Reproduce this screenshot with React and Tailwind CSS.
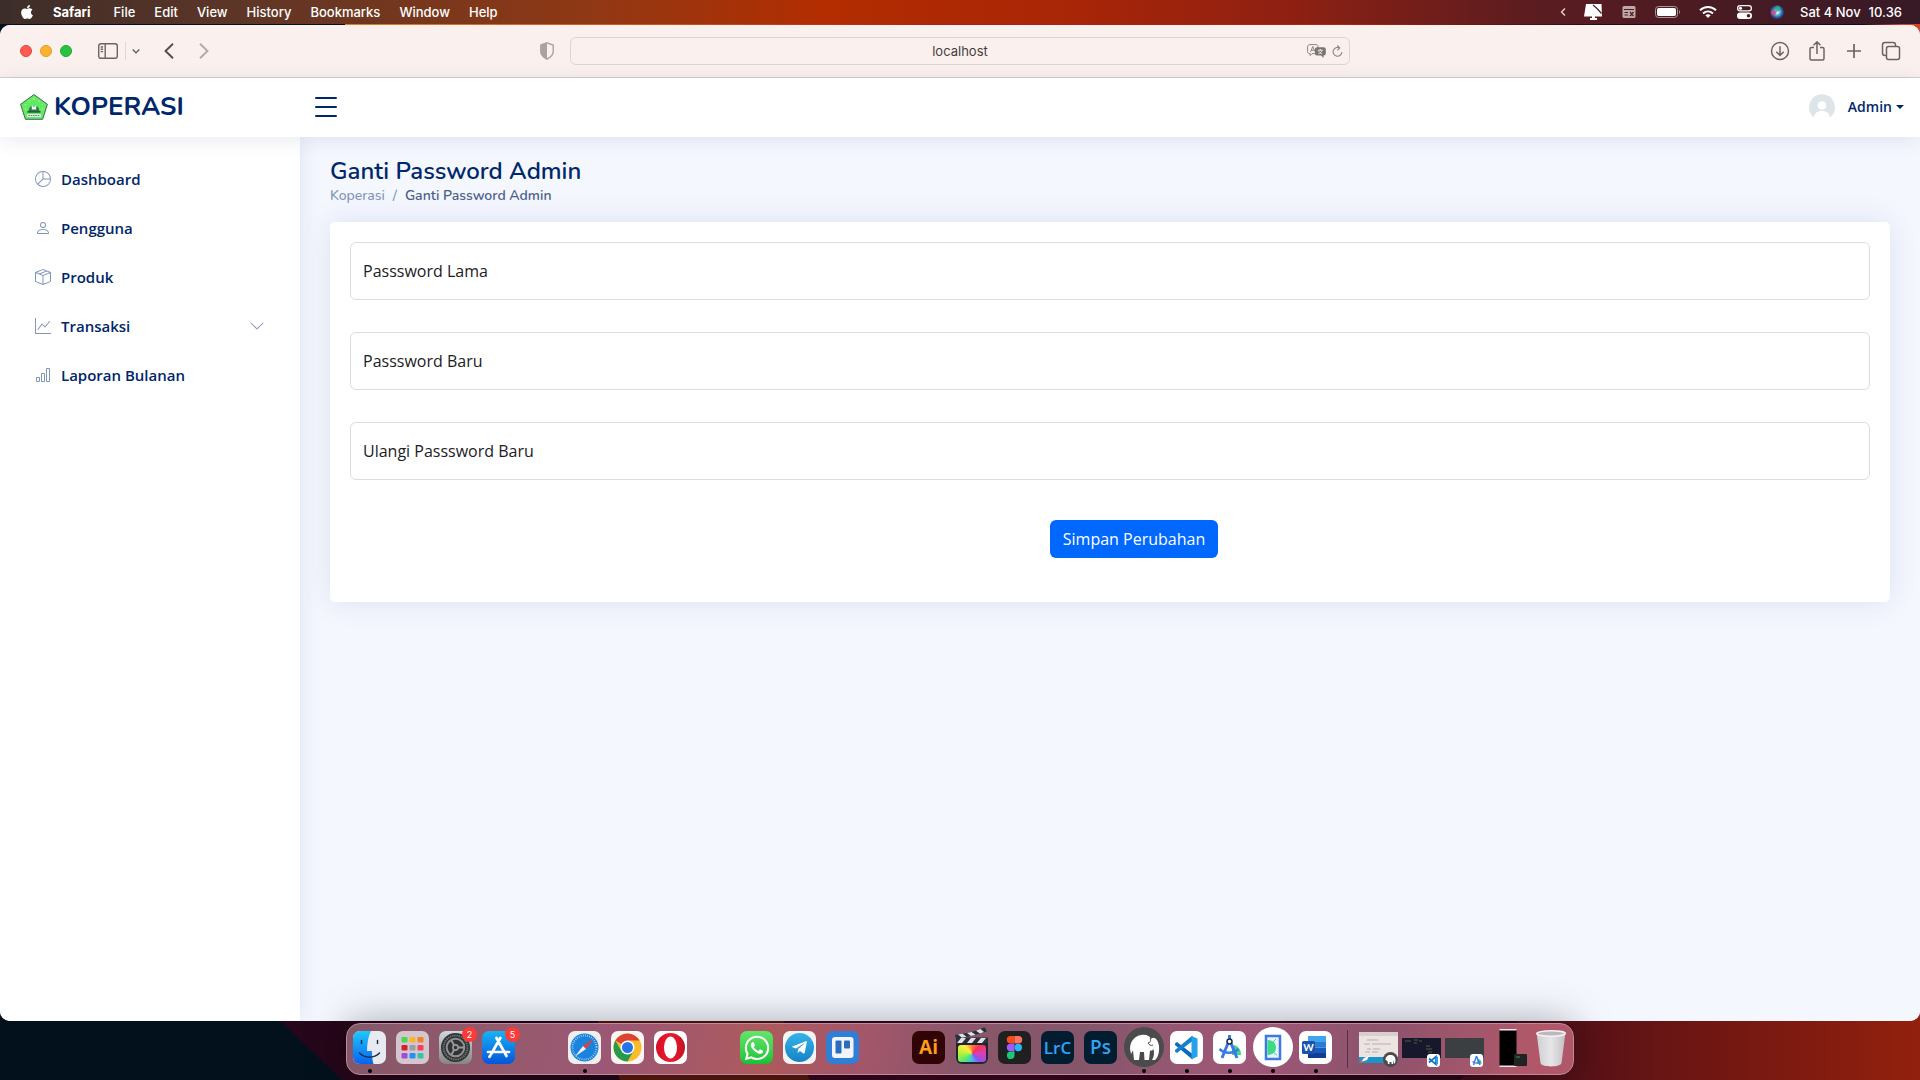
// ============================================================
// Koperasi Admin - change password page
// Desktop shell (menu bar, Safari window, dock) + page content.
// ============================================================

import {
  BsPieChart,
  BsPerson,
  BsBoxSeam,
  BsGraphUp,
  BsBarChart,
  BsChevronDown,
} from 'react-icons/bs';
import { FaApple, FaWhatsapp, FaTelegramPlane } from 'react-icons/fa';

const MENUS = ['File', 'Edit', 'View', 'History', 'Bookmarks', 'Window', 'Help'];

const NAV_ITEMS = [
  { label: 'Dashboard', Icon: BsPieChart },
  { label: 'Pengguna', Icon: BsPerson },
  { label: 'Produk', Icon: BsBoxSeam },
  { label: 'Transaksi', Icon: BsGraphUp, expandable: true },
  { label: 'Laporan Bulanan', Icon: BsBarChart },
];

const FIELDS = [
  { id: 'old-password', label: 'Passsword Lama' },
  { id: 'new-password', label: 'Passsword Baru' },
  { id: 'repeat-password', label: 'Ulangi Passsword Baru' },
];

// ---------- Wallpaper ----------

const Wallpaper = () => (
  <svg className="absolute inset-0 h-full w-full" viewBox="0 0 1920 1080" preserveAspectRatio="none" aria-hidden="true">
    <defs>
      <linearGradient id="wpTop" x1="0" x2="1" y1="0" y2="0">
        <stop offset="0.18" stopColor="#d9812a" />
        <stop offset="0.35" stopColor="#c9551c" />
        <stop offset="0.5" stopColor="#a3201c" />
        <stop offset="0.7" stopColor="#b02812" />
        <stop offset="0.84" stopColor="#1a0a1c" />
        <stop offset="0.97" stopColor="#120a20" />
        <stop offset="0.99" stopColor="#d2452c" />
      </linearGradient>
      <linearGradient id="wpRight" x1="0" x2="1" y1="0" y2="0">
        <stop offset="0" stopColor="#3f0c1b" />
        <stop offset="0.5" stopColor="#6d1613" />
        <stop offset="1" stopColor="#93200d" />
      </linearGradient>
    </defs>
    <rect width="1920" height="1080" fill="#26061a" />
    <rect width="1920" height="500" fill="url(#wpTop)" />
    <rect width="345" height="500" fill="#04121f" />
    <path d="M0 1000H258L342 1080H0Z" fill="#03111d" />
    <path d="M590 1000H775L810 1080H620Z" fill="#5a180f" />
    <path d="M775 1000H1270L1320 1080H810Z" fill="#38061f" />
    <path d="M1270 1000H1540L1460 1080H1320Z" fill="#2b0718" />
    <path d="M1540 1000H1920V1080H1460Z" fill="url(#wpRight)" />
  </svg>
);

// ---------- Menu bar ----------

const MenuBar = () => (
  <header className="relative flex h-6 shrink-0 items-center justify-between bg-[linear-gradient(90deg,#3c2d2a_0%,#5f3626_13%,#913814_31%,#b32d00_43%,#a82507_56%,#8f2012_67%,#5a1c20_80%,#361a26_100%)] pr-[18px] pl-5 text-[13px] leading-[22px] font-medium text-white">
    <nav className="flex items-center gap-[19px]" aria-label="Menu bar">
      <FaApple className="h-4 w-[14px]" />
      <span className="mr-1 font-bold">Safari</span>
      {MENUS.map((menu) => (
        <button key={menu} type="button">{menu}</button>
      ))}
    </nav>
    <div className="flex items-center">
      <svg className="mr-[17px] h-3 w-2" viewBox="0 0 8 12" fill="none" stroke="#ead9d9" strokeWidth="1.3">
        <path d="M6 2.5 2.5 6 6 9.5" />
      </svg>
      <svg className="mr-5 h-4 w-[18px]" viewBox="0 0 18 16">
        <path d="M2 0H17.5L18 12.5H0Z" fill="#fff" />
        <path d="M8 12H11V14H13V16H6V14H8Z" fill="#fff" />
        <path d="m9 1 4 3.500 4.500 5" stroke="#532024" strokeWidth="1.200" fill="none" />
      </svg>
      <svg className="mr-[19px] h-[14px] w-[14px]" viewBox="0 0 14 14">
        <rect x="0.5" y="1" width="13" height="12" rx="1.5" fill="#bfa8a8" />
        <path d="M2 4.500H12M2.500 7.500H6M2.500 10H6M8 7l3.500 4M11.500 7 8 11" stroke="#4b2024" strokeWidth="1.200" />
      </svg>
      <svg className="mr-[18px] h-3 w-[26px]" viewBox="0 0 26 12">
        <rect x="0.5" y="0.5" width="22" height="11" rx="3" fill="none" stroke="#a89598" />
        <rect x="2" y="2" width="19" height="8" rx="1.8" fill="#fff" />
        <path d="M24 4v4c1.300-.5 1.300-3.500 0-4Z" fill="#a89598" />
      </svg>
      <svg className="mr-5 h-3 w-[18px]" viewBox="0 0 18 12" fill="none" stroke="#fff" strokeWidth="2">
        <path d="M1 4.300C5.500 0 12.500 0 17 4.300M4 7.400c3-2.700 7-2.700 10 0" />
        <path d="M6.300 9.300c1.700-1.300 3.700-1.300 5.400 0L9 12Z" fill="#fff" stroke="none" />
      </svg>
      <svg className="mr-[18px] h-[14px] w-[15px]" viewBox="0 0 15 14">
        <rect x="0.6" y="0.6" width="13.800" height="5.300" rx="2.650" fill="none" stroke="#fff" strokeWidth="1.200" />
        <circle cx="3.500" cy="3.250" r="1.600" fill="#fff" />
        <rect y="7.600" width="15" height="6.400" rx="3.200" fill="#fff" />
        <circle cx="11.500" cy="10.800" r="1.800" fill="#4b1d22" />
      </svg>
      <span className="mr-4 h-[14px] w-[14px] rounded-full bg-[radial-gradient(circle,#fff_8%,#4fc4d8_30%,#3456a8_55%,#16213e_85%)]">
        <svg viewBox="0 0 14 14">
          <path d="M1 8C1 4 4 4 7 7 4 12 2 11 1 8Z" fill="#e0417c" opacity=".8" />
          <path d="M7 1c4 0 5 4 0 6C4 5 4 2 7 1Z" fill="#2fae7d" opacity=".8" />
        </svg>
      </span>
      <span className="mr-2">Sat 4 Nov</span>
      <time>10.36</time>
    </div>
  </header>
);

// ---------- Safari toolbar ----------

const Toolbar = () => (
  <div className="grid h-[53px] shrink-0 grid-cols-[1fr_780px_1fr] items-center border-b border-[#d6cfce] bg-[#faf1ef] text-[#6b6462]">
    <div className="flex items-center pl-5">
      <div className="flex gap-2">
        <button type="button" aria-label="Close" className="h-3 w-3 rounded-full border border-[#e2463f] bg-[#ff5a52]" />
        <button type="button" aria-label="Minimize" className="h-3 w-3 rounded-full border border-[#df9c2a] bg-[#fdb32f]" />
        <button type="button" aria-label="Zoom" className="h-3 w-3 rounded-full border border-[#1fa632] bg-[#28c240]" />
      </div>
      <button type="button" aria-label="Show sidebar" className="ml-[26px]">
        <svg className="h-4 w-5" viewBox="0 0 20 16" fill="none" stroke="currentColor" strokeWidth="1.400">
          <rect x="0.7" y="0.7" width="18.600" height="14.600" rx="2.200" />
          <path d="M7.200 1v14M2.600 4h2.500M2.600 6.300h2.500M2.600 8.600h2.500" />
        </svg>
      </button>
      <span className="ml-[7px] h-[18px] w-px bg-[#ded6d4]" />
      <button type="button" aria-label="Tab groups" className="ml-[6px]">
        <svg className="h-2 w-2" viewBox="0 0 8 8" fill="none" stroke="currentColor" strokeWidth="1.500">
          <path d="m.7 2.500 3.300 3.200 3.300-3.200" />
        </svg>
      </button>
      <button type="button" aria-label="Back" className="ml-6">
        <svg className="h-4 w-[10px]" viewBox="0 0 10 16" fill="none" stroke="#544d4b" strokeWidth="1.900">
          <path d="M9 .8 1.500 8 9 15.200" />
        </svg>
      </button>
      <button type="button" aria-label="Forward" className="ml-[25px]">
        <svg className="h-4 w-[10px]" viewBox="0 0 10 16" fill="none" stroke="#b3aaa8" strokeWidth="1.900">
          <path d="M1 .8 8.500 8 1 15.200" />
        </svg>
      </button>
      <svg className="mr-4 ml-auto h-[18px] w-[14px]" viewBox="0 0 14 18">
        <path d="M7 .8 13.200 3v6.500c0 3.500-3 6-6.200 7.700C3.800 15.500.8 13 .8 9.500V3Z" fill="none" stroke="#aaa3a1" strokeWidth="1.400" />
        <path d="M7 .8v16.400C3.800 15.500.8 13 .8 9.500V3Z" fill="#aaa3a1" />
      </svg>
    </div>

    <div className="flex h-7 items-center rounded-md border border-[#ddd5d3] pr-[6px] pl-[42px]">
      <input
        aria-label="Address"
        defaultValue="localhost"
        className="min-w-0 flex-1 bg-transparent pt-px text-center text-[13px] text-[#443e3d] outline-none"
      />
      <svg className="h-[14px] w-[19px]" viewBox="0 0 19 14">
        <path d="M3 .6h6c1.300 0 2 .7 2 2v5c0 1.300-.7 2-2 2H5L3.200 11.500V9.600C1.500 9.600.6 9 .6 7.600v-5C.6 1.300 1.700.6 3 .6Z" fill="none" stroke="#8c8583" />
        <path d="m3.600 7.800 2.200-5.300L8 7.800M4.300 6.200h3" fill="none" stroke="#8c8583" />
        <path d="M10 3.300h6.500c1.400 0 2.300.8 2.300 2.100v4c0 1.300-.9 2-2.300 2V14L14 11.400h-4c-1.300 0-2-.7-2-2v-4c0-1.300.7-2.100 2-2.100Z" fill="#7b7472" />
        <path d="M10.800 6.200h5M13.300 5v1.200M11.300 10c2-.8 3.300-2 3.700-3.800M11.600 6.500c.6 1.600 1.900 2.800 3.500 3.500" fill="none" stroke="#fff" strokeWidth=".8" />
      </svg>
      <button type="button" aria-label="Reload" className="ml-[6px]">
        <svg className="h-3 w-[11px]" viewBox="0 0 11 12" fill="none" stroke="#8c8583" strokeWidth="1.100">
          <path d="M7.500 2.900A4.400 4.400 0 1 0 9.900 7M5.300.4l2.500 2.500L5.300 5.400" />
        </svg>
      </button>
    </div>

    <div className="flex items-center justify-end gap-[17px] pr-[19px]">
      <button type="button" aria-label="Downloads">
        <svg className="h-5 w-5" viewBox="0 0 20 20" fill="none" stroke="currentColor" strokeWidth="1.500">
          <circle cx="10" cy="10" r="8.500" />
          <path d="M10 5.300v9M6.300 10.800 10 14.400l3.700-3.600" />
        </svg>
      </button>
      <button type="button" aria-label="Share">
        <svg className="h-5 w-5" viewBox="0 0 20 20" fill="none" stroke="currentColor" strokeWidth="1.500">
          <path d="M7 6.500H4.500c-1 0-1.500.6-1.500 1.500v9.500c0 .9.500 1.500 1.500 1.500h11c1 0 1.500-.6 1.500-1.500V8c0-.9-.5-1.500-1.500-1.500H13M10 13V1M6.500 4.200 10 .9l3.500 3.300" />
        </svg>
      </button>
      <button type="button" aria-label="New tab">
        <svg className="h-5 w-5" viewBox="0 0 20 20" fill="none" stroke="currentColor" strokeWidth="1.700">
          <path d="M10 3v14M3 10h14" />
        </svg>
      </button>
      <button type="button" aria-label="Tab overview">
        <svg className="h-5 w-5" viewBox="0 0 20 20" fill="none" stroke="currentColor" strokeWidth="1.500">
          <rect x="5.500" y="5.500" width="13" height="13" rx="2" />
          <path d="M5.500 14.500H4C2.500 14.500 1.500 13.600 1.500 12V4C1.500 2.500 2.500 1.500 4 1.500h8c1.500 0 2.500 1 2.500 2.500v1.500" />
        </svg>
      </button>
    </div>
  </div>
);

// ---------- Page header ----------

const Logo = () => (
  <svg className="h-[26px] w-7" viewBox="0 0 28 26">
    <path d="M14 .6 27.400 10.300 22.600 25.300H5.400L.6 10.300Z" fill="#5fea6a" stroke="#3f6b46" strokeWidth="1" />
    <g fill="#d6ee3c">
      <circle cx="14" cy="5" r=".9" />
      <circle cx="9" cy="7" r=".8" />
      <circle cx="19" cy="7" r=".8" />
      <circle cx="5.500" cy="10.500" r=".8" />
      <circle cx="22.500" cy="10.500" r=".8" />
      <circle cx="5.500" cy="15" r=".8" />
      <circle cx="22.500" cy="15" r=".8" />
    </g>
    <path d="M8.500 17.500c.2-2 1-4 2.500-5.500l1.500 2.500 1.500-3 1.500 3L17 12c1.500 1.500 2.300 3.500 2.500 5.500Z" fill="#2c7a3c" />
    <path d="M12 11.500 14 13l2-1.500.3 4h-4.600Z" fill="#f4fff4" />
    <path d="M7.500 17h13v1.800h-13Z" fill="#2a5f38" />
    <path d="M7 20h14v3H7Z" fill="#dfe9e0" />
    <path d="M8.500 21.500h11" stroke="#6c7f70" strokeDasharray="1.500 .8" />
  </svg>
);

const PageHeader = () => (
  <header className="relative z-20 flex h-[59px] shrink-0 items-center bg-white pr-4 pb-[2px] pl-5 text-[#00266b] shadow-[0_2px_20px_rgba(1,41,112,0.1)]">
    <div className="flex w-[295px] items-center">
      <a href="#" className="flex items-center gap-[6px]">
        <Logo />
        <span className="font-[Nunito,'Open_Sans',sans-serif] text-[26px] leading-8 font-bold">KOPERASI</span>
      </a>
    </div>
    <button type="button" aria-label="Toggle sidebar">
      <svg className="h-5 w-[22px]" viewBox="0 0 22 20" stroke="currentColor" strokeWidth="2" strokeLinecap="round">
        <path d="M1 1h20M1 10h20M1 19h20" />
      </svg>
    </button>
    <button type="button" className="ml-auto flex items-center text-[14px] font-semibold">
      <svg className="mr-[13px] h-[26px] w-[26px]" viewBox="0 0 26 26">
        <path d="M5 23.500A13 13 0 1 1 21 23.500C20.800 19.500 18 17 13 17s-7.800 2.500-8 6.500Z" fill="#dee5e8" />
        <circle cx="13" cy="11.500" r="4.300" fill="#fff" />
      </svg>
      Admin
      <svg className="ml-1 h-1 w-2" viewBox="0 0 8 4" fill="currentColor">
        <path d="M0 0h8L4 4Z" />
      </svg>
    </button>
  </header>
);

const Sidebar = () => (
  <aside className="relative z-10 w-[300px] shrink-0 bg-white p-5 shadow-[0_0_20px_rgba(1,41,112,0.1)]">
    <ul className="flex flex-col gap-[5px]">
      {NAV_ITEMS.map(({ label, Icon, expandable }) => (
        <li key={label}>
          <a href="#" className="flex h-11 items-center px-[15px] text-[15px] font-semibold text-[#00266b]">
            <Icon className="mr-[10px] h-4 w-4 text-[#8095bb]" />
            {label}
            {expandable && <BsChevronDown className="ml-auto h-4 w-4 text-[#8095bb]" />}
          </a>
        </li>
      ))}
    </ul>
  </aside>
);

const PasswordForm = () => (
  <form
    className="mt-4 rounded-[5px] bg-white px-5 pt-5 pb-11 shadow-[0_0_30px_rgba(1,41,112,0.1)]"
    onSubmit={(e) => e.preventDefault()}
  >
    <div className="flex flex-col gap-8">
      {FIELDS.map(({ id, label }) => (
        <div key={id} className="relative">
          <input
            id={id}
            type="password"
            className="block h-[58px] w-full rounded-md border border-[#d9dee3] px-3 pt-5 text-[16px] text-[#212529] outline-none"
          />
          <label htmlFor={id} className="pointer-events-none absolute top-4 left-[13px] text-[16px] leading-[26px] text-[#1c2024]">
            {label}
          </label>
        </div>
      ))}
    </div>
    <div className="mt-10 flex justify-center pl-12">
      <button type="submit" className="h-[38px] rounded-md bg-[#0068fe] px-[13px] text-[16px] text-white">
        Simpan Perubahan
      </button>
    </div>
  </form>
);

const Main = () => (
  <main className="flex-1 bg-[#f4f7fe] px-[30px] pt-5">
    <h1 className="font-[Nunito,'Open_Sans',sans-serif] text-[24px] leading-[28px] font-semibold text-[#00266b]">
      Ganti Password Admin
    </h1>
    <nav aria-label="Breadcrumb" className="flex gap-2 font-[Nunito,'Open_Sans',sans-serif] text-[14px] leading-[21px] font-medium text-[#8095bb]">
      <a href="#">Koperasi</a>
      <span>/</span>
      <span className="font-semibold text-[#4a608a]">Ganti Password Admin</span>
    </nav>
    <PasswordForm />
  </main>
);

// ---------- Dock ----------

const FinderIcon = () => (
  <svg viewBox="0 0 33 33">
    <defs>
      <linearGradient id="finderBlue" x1="0" x2="0" y1="0" y2="1">
        <stop stopColor="#1fc8fb" />
        <stop offset="1" stopColor="#0a62f0" />
      </linearGradient>
    </defs>
    <rect width="33" height="33" rx="7" fill="#e8eaf0" />
    <path d="M18 0c-3 6-4 13-4 20h5c-.3 4 .3 9 1.500 13H7a7 7 0 0 1-7-7V7a7 7 0 0 1 7-7Z" fill="url(#finderBlue)" />
    <path d="M8.500 9.500v3M24.500 9.500v3M6.500 22c5.500 5.500 14.500 5.500 20 0" stroke="#16304d" strokeWidth="1.500" strokeLinecap="round" fill="none" />
  </svg>
);

const LAUNCHPAD_COLORS = ['#46d94c', '#f9b52c', '#f58122', '#d6202c', '#98a1a8', '#f6405f', '#9c4cd8', '#1e93f5', '#2fc8a8'];

const LaunchpadIcon = () => (
  <svg viewBox="0 0 33 33">
    <rect width="33" height="33" rx="7" fill="#d5c5ce" />
    {LAUNCHPAD_COLORS.map((color, i) => (
      <rect key={color} x={5.5 + (i % 3) * 8} y={6 + Math.floor(i / 3) * 8} width="6" height="5.500" rx="1.300" fill={color} />
    ))}
  </svg>
);

const SettingsIcon = () => (
  <svg viewBox="0 0 33 33">
    <defs>
      <linearGradient id="settingsBg" x1="0" x2="0" y1="0" y2="1">
        <stop stopColor="#cfd8dd" />
        <stop offset="1" stopColor="#858585" />
      </linearGradient>
    </defs>
    <rect width="33" height="33" rx="7" fill="url(#settingsBg)" />
    <circle cx="16.500" cy="16.500" r="14.500" fill="#303234" />
    <circle cx="16.500" cy="16.500" r="12" fill="none" stroke="#797c7e" strokeWidth="1.800" strokeDasharray="1.300 .9" />
    <circle cx="16.500" cy="16.500" r="8.800" fill="none" stroke="#8d9091" strokeWidth="2" />
    <circle cx="16.500" cy="16.500" r="2.600" fill="none" stroke="#989b9c" strokeWidth="1.600" />
    <path d="M19 16.500h6M15.200 14.300l-3-5.200M15.200 18.700l-3 5.200" stroke="#989b9c" strokeWidth="2" />
  </svg>
);

const AppStoreIcon = () => (
  <svg viewBox="0 0 33 33">
    <defs>
      <linearGradient id="storeBg" x1="0" x2="0" y1="0" y2="1">
        <stop stopColor="#18b2f4" />
        <stop offset="1" stopColor="#0755d9" />
      </linearGradient>
    </defs>
    <rect width="33" height="33" rx="7" fill="url(#storeBg)" />
    <path d="m18.300 7-8.800 15.500M14.500 7 24.500 25M6 21h14M23.500 21H27M8.300 24.500l-.8 1.300" stroke="#fff" strokeWidth="2.700" strokeLinecap="round" />
  </svg>
);

const SafariIcon = () => (
  <svg viewBox="0 0 33 33">
    <rect width="33" height="33" rx="7" fill="#efeff0" />
    <circle cx="16.500" cy="16.500" r="14" fill="#1b83dc" />
    <circle cx="16.500" cy="16.500" r="12" fill="none" stroke="#d5ebfb" strokeWidth="2" strokeDasharray=".6 1.500" />
    <path d="M26 7.500 15 15l3 3Z" fill="#ee3c34" />
    <path d="M7 25.500 15 15l3 3Z" fill="#f3f3f3" />
  </svg>
);

const ChromeIcon = () => (
  <svg viewBox="0 0 33 33">
    <rect width="33" height="33" rx="7" fill="#fbf5f3" />
    <circle cx="16.500" cy="16.500" r="14" fill="#fbbc2c" />
    <path d="M16.500 16.500 4.400 9.500A14 14 0 0 1 28.600 9.500H16.500Z" fill="#dd4133" />
    <path d="M4.400 9.500A14 14 0 0 0 16.500 30.500L22.600 20 16.500 16.500 10.500 20Z" fill="#279b4c" />
    <circle cx="16.500" cy="16.500" r="7" fill="#fff" />
    <circle cx="16.500" cy="16.500" r="5.500" fill="#2374e8" />
  </svg>
);

const OperaIcon = () => (
  <svg viewBox="0 0 33 33">
    <defs>
      <linearGradient id="operaRed" x1="0" x2="1" y1="0" y2="0">
        <stop stopColor="#d40f26" />
        <stop offset=".5" stopColor="#f01a30" />
        <stop offset="1" stopColor="#c01322" />
      </linearGradient>
    </defs>
    <rect width="33" height="33" rx="7" fill="#fff" />
    <circle cx="16.500" cy="16.500" r="14.500" fill="url(#operaRed)" />
    <ellipse cx="16.500" cy="16.500" rx="6.500" ry="11" fill="#fff" />
  </svg>
);

const WhatsAppIcon = () => (
  <span className="flex h-full w-full items-center justify-center rounded-[7px] bg-linear-to-b from-[#62e56b] to-[#12c234] text-white">
    <FaWhatsapp className="h-[28px] w-[28px]" />
  </span>
);

const TelegramIcon = () => (
  <span className="flex h-full w-full items-center justify-center rounded-[7px] bg-[#f4f4f5]">
    <span className="flex h-[29px] w-[29px] items-center justify-center rounded-full bg-linear-to-b from-[#33b3ea] to-[#1683c6] text-white">
      <FaTelegramPlane className="h-[17px] w-[17px]" />
    </span>
  </span>
);

const TrelloIcon = () => (
  <svg viewBox="0 0 33 33">
    <rect width="33" height="33" rx="7" fill="#2f7fd8" />
    <rect x="6" y="6" width="21.500" height="21" rx="3" fill="#f2f4f8" />
    <rect x="9.500" y="9.500" width="6" height="13" rx="1" fill="#2a6cc0" />
    <rect x="18" y="9.500" width="6" height="8" rx="1" fill="#2a6cc0" />
  </svg>
);

const FinalCutIcon = () => (
  <svg viewBox="0 0 33 33" className="overflow-visible">
    <path d="M1 12h32v15a6 6 0 0 1-6 6H7a6 6 0 0 1-6-6Z" fill="#22252b" />
    <foreignObject x="3" y="14" width="28" height="17">
      <div className="h-full w-full rounded-[3px] bg-[conic-gradient(#ff7a3c,#f4364c,#e03cb8,#8a55e8,#48b8f5,#4be87a,#b8f03c,#fff03c,#ff7a3c)]" />
    </foreignObject>
    <path d="M1 6.500h32V12H1ZM0 4C8 3 20 1 29-3.500c1 0 2.500 2 2.500 4C22 4 12 6 1 8Z" fill="#2c2f38" />
    <path d="m2 12 4-5h5l-4 5ZM12 12l4-5h5l-4 5ZM22 12l4-5h5l-4 5Z" fill="#dfe2ea" />
    <path d="m3 3.500 4 3.200 4.500-1L7.500 2.800ZM12 2l4 3 4.500-1.200L16.500 1ZM21-.3l4 2.700 4-1.400-3.500-3Z" fill="#dfe2ea" />
  </svg>
);

const FigmaIcon = () => (
  <svg viewBox="0 0 33 33">
    <rect width="33" height="33" rx="7" fill="#202020" />
    <path d="M16.500 5h-4a3.700 3.700 0 0 0 0 7.400h4Z" fill="#f24e1e" />
    <path d="M16.500 5h4a3.700 3.700 0 0 1 0 7.400h-4Z" fill="#ff7262" />
    <path d="M16.500 12.800h-4a3.700 3.700 0 0 0 0 7.400h4Z" fill="#a259ff" />
    <circle cx="20.300" cy="16.500" r="3.700" fill="#29b8f6" />
    <path d="M12.500 20.500h4v3.700a3.800 3.800 0 1 1-4-3.700Z" fill="#16c878" />
  </svg>
);

const AiIcon = () => (
  <span className="flex h-full w-full items-center justify-center rounded-[7px] bg-[#300405] font-['Open_Sans',sans-serif] text-[19px] leading-none font-bold text-[#ff9a1a]">Ai</span>
);
const LrcIcon = () => (
  <span className="flex h-full w-full items-center justify-center rounded-[7px] bg-[#021d2f] font-['Open_Sans',sans-serif] text-[17px] leading-none font-semibold text-[#2fa3f7]">LrC</span>
);
const PsIcon = () => (
  <span className="flex h-full w-full items-center justify-center rounded-[7px] bg-[#021d2f] font-['Open_Sans',sans-serif] text-[19px] leading-none font-semibold text-[#2fa3f7]">Ps</span>
);

const MampIcon = () => (
  <svg viewBox="0 0 40 40">
    <circle cx="20" cy="20" r="20" fill="#4b4b4b" />
    <path d="M6 22c0-8 5-13 11-14 5-1 9 1 10 4 3-3 7 0 8 7 .5 6-1 12-4 14h-3c2-3 2.500-7 1.500-11-1 1.500-2.500 2-3.500 1.500L25 33h-4.500l-.5-8h-4l-1 8h-5L9 23.500 7 27Z" fill="#fff" />
    <path d="M26 11c1 3 1 4-2 5 1 2 3 3 5 2" fill="none" stroke="#4b4b4b" strokeWidth="1" />
  </svg>
);

const VsCodeIcon = () => (
  <svg viewBox="0 0 33 33">
    <rect width="33" height="33" rx="7" fill="#fff" />
    <path d="M5 12.500 7 11 22.500 23v5.500L5 14Z" fill="#0a6ab8" />
    <path d="M5 20.500 7 22 22.500 10V4.500L5 19Z" fill="#1580cc" />
    <path d="m21.500 5 6 2.500v18l-6 2.800Z" fill="#27a0ee" />
  </svg>
);

const AndroidStudioIcon = () => (
  <svg viewBox="0 0 33 33">
    <rect width="33" height="33" rx="7" fill="#fff" />
    <path d="M19 14c5 0 9 3 9 10h-9Z" fill="#3ddc84" />
    <path d="M15.500 11 9 27M17.500 11l6.500 16" stroke="#3c79e6" strokeWidth="3" />
    <path d="M6.500 18c5 5 14 5 19 0" stroke="#3c79e6" strokeWidth="2.500" fill="none" />
    <path d="M15 4h3v5h-3Z" fill="#3c79e6" />
    <circle cx="16.500" cy="10.500" r="2.500" fill="#fff" stroke="#173044" strokeWidth="1.500" />
  </svg>
);

const EmulatorIcon = () => (
  <svg viewBox="0 0 40 40">
    <circle cx="20" cy="20" r="20" fill="#fff" />
    <rect x="13" y="9" width="14" height="23" fill="#e8f1fd" stroke="#3c79e6" strokeWidth="2.500" />
    <path d="M14.500 13c5 0 8.500 3 8.500 7.500S19.500 28 14.500 28Z" fill="#3ddc84" />
    <path d="m20 15 3-3M21 26l3 2" stroke="#3ddc84" />
  </svg>
);

const WordIcon = () => (
  <svg viewBox="0 0 33 33">
    <rect width="33" height="33" rx="7" fill="#fff" />
    <path d="M9 5h18v6H9Z" fill="#41a5ee" />
    <path d="M9 11h18v5.500H9Z" fill="#2b7cd3" />
    <path d="M9 16.500h18V22H9Z" fill="#185abd" />
    <path d="M9 22h18v5H9Z" fill="#103f91" />
    <rect x="3" y="10" width="13" height="13" rx="1.500" fill="#1a53ad" />
    <text x="9.500" y="20" textAnchor="middle" fill="#fff" fontSize="10" fontWeight="700" fontFamily="Lato, sans-serif">W</text>
  </svg>
);

// null leaves an empty slot between groups of apps
const DOCK_APPS = [
  { name: 'Finder', Icon: FinderIcon, open: true },
  { name: 'Launchpad', Icon: LaunchpadIcon },
  { name: 'System Preferences', Icon: SettingsIcon, badge: 2 },
  { name: 'App Store', Icon: AppStoreIcon, badge: 5 },
  null,
  { name: 'Safari', Icon: SafariIcon, open: true },
  { name: 'Chrome', Icon: ChromeIcon },
  { name: 'Opera', Icon: OperaIcon },
  null,
  { name: 'WhatsApp', Icon: WhatsAppIcon },
  { name: 'Telegram', Icon: TelegramIcon },
  { name: 'Trello', Icon: TrelloIcon },
  null,
  { name: 'Illustrator', Icon: AiIcon },
  { name: 'Final Cut Pro', Icon: FinalCutIcon },
  { name: 'Figma', Icon: FigmaIcon },
  { name: 'Lightroom Classic', Icon: LrcIcon },
  { name: 'Photoshop', Icon: PsIcon },
  { name: 'MAMP', Icon: MampIcon, open: true, large: true },
  { name: 'Visual Studio Code', Icon: VsCodeIcon, open: true },
  { name: 'Android Studio', Icon: AndroidStudioIcon, open: true },
  { name: 'Android Emulator', Icon: EmulatorIcon, open: true, large: true },
  { name: 'Word', Icon: WordIcon, open: true },
];

const DockApp = ({ app }) => {
  if (!app) return <li className="w-[43px]" />;
  const { name, Icon, open, badge, large } = app;
  return (
    <li className="relative flex h-full w-[43px] justify-center">
      <button
        type="button"
        aria-label={name}
        className={large ? 'mt-[3px] h-10 w-10' : 'mt-[7px] h-[33px] w-[33px]'}
      >
        <Icon />
      </button>
      {badge && (
        <span className="absolute top-[3px] right-0 flex h-[15px] w-[15px] items-center justify-center rounded-full bg-[#fb3b38] text-[9px] leading-none text-white">
          {badge}
        </span>
      )}
      {open && <span className="absolute bottom-px h-1 w-1 rounded-full bg-black" />}
    </li>
  );
};

const MampWindow = () => (
  <svg className="h-9 w-[39px]" viewBox="0 0 39 36">
    <rect y="1" width="39" height="31" fill="#ece4e2" />
    <path d="M0 1h39v4H0Z" fill="#d9cecc" />
    <path d="M8 9h11M5 13h6M13 13h19M8 18h4M14 18h7M6 21h5M13 21h6" stroke="#b9aeac" strokeWidth="1" />
    <path d="M0 26h39v6H0Z" fill="#1e93c8" />
    <path d="m2 31 3-4 5-2-2 4Z" fill="#fff" />
    <path d="m0 32 3-3 1 2Z" fill="#f06a2a" />
    <circle cx="31.500" cy="28.500" r="7.500" fill="#4b4b4b" />
    <path d="M26.500 29c0-3 2-5 5-5s5 2 5 5c0 2-.5 3-1.500 4v-4l-1 4h-1.500v-2h-2v2H29l-.5-3Z" fill="#fff" />
  </svg>
);

const CodeWindow = () => (
  <svg className="h-[30px] w-[39px]" viewBox="0 0 39 30">
    <rect y="1" width="39" height="20" fill="#17182c" />
    <path d="M3 4h6M12 3h4M12 6h3M17 4h3M24 9h4M24 12h6M26 15h4" stroke="#5a5a3c" />
    <rect x="25" y="17" width="13" height="13" rx="3" fill="#fff" />
    <path d="m27 21.500 7 6V19.500l-7 6" stroke="#1672c0" strokeWidth="1.700" fill="none" />
    <path d="m34 19 2 1v7l-2 1Z" fill="#27a0ee" />
  </svg>
);

const StudioWindow = () => (
  <svg className="h-[30px] w-[39px]" viewBox="0 0 39 30">
    <rect y="1" width="39" height="20" fill="#3c3f41" />
    <rect x="25" y="17" width="13" height="13" rx="3" fill="#fff" />
    <path d="M32 22c3 0 5 2 4.500 5H32Z" fill="#3ddc84" />
    <path d="m31.500 19-3 9M31.500 19l3.500 9M27.500 24.500c2 2 5.500 2 8 0" stroke="#3c79e6" strokeWidth="1.400" fill="none" />
  </svg>
);

const PhoneWindow = () => (
  <svg className="h-[38px] w-[39px]" viewBox="-11 0 39 38">
    <rect x=".5" y=".5" width="17" height="37" rx="1" fill="#000" />
    <path d="M.5 0h17v1.500H.5ZM.5 36.500h17V38H.5Z" fill="#efe8ea" />
    <rect x="15" y="25" width="13" height="12" rx="1" fill="#202422" />
    <path d="M17 28h4" stroke="#2f9b52" />
  </svg>
);

const TrashIcon = () => (
  <svg className="h-[37px] w-[30px]" viewBox="0 0 30 37">
    <defs>
      <linearGradient id="trashBody" x1="0" x2="1" y1="0" y2="0">
        <stop stopColor="#cfcfd2" />
        <stop offset=".5" stopColor="#e6e6e8" />
        <stop offset="1" stopColor="#c3c0c4" />
      </linearGradient>
    </defs>
    <path d="M.7 3.500 4.500 33c.5 4.500 20.500 4.500 21 0l3.800-29.500Z" fill="url(#trashBody)" />
    <ellipse cx="15" cy="3.500" rx="14.300" ry="2.700" fill="#bdb8bc" stroke="#f3f2f4" strokeWidth="1.400" />
  </svg>
);

const DOCK_WINDOWS = [
  { name: 'MAMP window', Icon: MampWindow },
  { name: 'Code window', Icon: CodeWindow },
  { name: 'Android Studio window', Icon: StudioWindow },
  { name: 'Emulator window', Icon: PhoneWindow },
  { name: 'Trash', Icon: TrashIcon },
];

const Dock = () => (
  <footer className="relative z-30 flex h-[59px] shrink-0 items-start justify-center pt-[2px]">
    <ul className="flex h-[52px] rounded-[14px] border border-[#bd8b9b] bg-[linear-gradient(100deg,#835868_0%,#96596d_14%,#9c5775_22%,#ad5a5c_34%,#a4566a_42%,#8a566a_50%,#85566a_60%,#a05878_73%,#8c536c_84%,#b0586a_96%)] px-px shadow-[0_0_40px_rgba(0,0,0,0.35)]">
      {DOCK_APPS.map((app, i) => (
        <DockApp key={i} app={app} />
      ))}
      <li className="flex w-5 justify-center pt-[6px]" aria-hidden="true">
        <span className="h-[38px] w-px bg-[#5c2c40]" />
      </li>
      {DOCK_WINDOWS.map(({ name, Icon }) => (
        <li key={name} className="flex w-[43px] items-end justify-center pb-[7px]">
          <button type="button" aria-label={name}><Icon /></button>
        </li>
      ))}
    </ul>
  </footer>
);

export default function App() {
  return (
    <div className="relative flex h-screen flex-col overflow-hidden font-[Inter,sans-serif]">
      <Wallpaper />
      <MenuBar />
      <section className="relative mt-px flex min-h-0 flex-1 flex-col overflow-hidden rounded-[10px] bg-white">
        <Toolbar />
        <div className="flex min-h-0 flex-1 flex-col font-['Open_Sans',sans-serif]">
          <PageHeader />
          <div className="flex min-h-0 flex-1">
            <Sidebar />
            <Main />
          </div>
        </div>
      </section>
      <Dock />
    </div>
  );
}
